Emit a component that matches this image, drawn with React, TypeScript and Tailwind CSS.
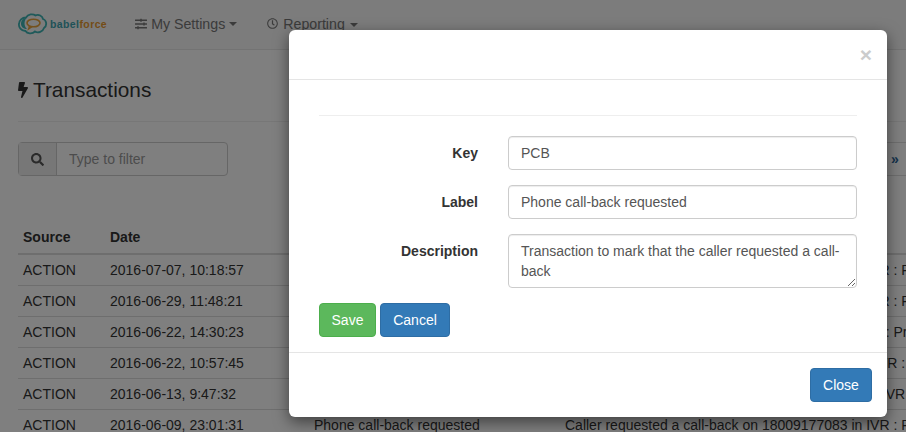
import { FaBolt, FaRegClock, FaSearch, FaSlidersH } from "react-icons/fa";

const rows = [
  { date: "2016-07-07, 10:18:57", number: "18009177083" },
  { date: "2016-06-29, 11:48:21", number: "18009177083" },
  { date: "2016-06-22, 14:30:23", number: "1800917708" },
  { date: "2016-06-22, 10:57:45", number: "180091770831" },
  { date: "2016-06-13, 9:47:32", number: "1800917708312" },
  { date: "2016-06-09, 23:01:31", number: "18009177083" },
];

function Caret() {
  return <span className="ml-1 inline-block border-x-[4px] border-t-[4px] border-x-transparent border-t-current align-middle" />;
}

function Logo() {
  return (
    <div className="flex items-center">
      <svg width="30" height="22" viewBox="0 0 30 22" fill="none">
        <path
          d="M8 4.500C10 1 15 .5 17.500 2.500 20.500 1 24.500 3 25 6c3.500 1 4.500 6.500 1 9-1 3.500-6 5.500-9 3.500C14 21.500 9 20.500 7.500 18 3 18 .5 14 1 11 1.200 7.500 4 4.500 8 4.500Z"
          stroke="#3fb4b4"
          strokeWidth="1.800"
        />
        <path d="M3 11c0-4 3-6 6-6.500C6 7 5.500 13 9 16c-3 0-6-2-6-5Z" fill="#3fb4b4" />
        <ellipse cx="15.500" cy="10" rx="6.500" ry="3.800" stroke="#e8a33a" strokeWidth="1.600" />
        <path d="M11.500 13.200 10.500 16l3.500-2.400" stroke="#e8a33a" strokeWidth="1.300" />
      </svg>
      <span className="ml-[2px] text-[10.5px] font-bold tracking-[0.4px] text-[#3fa5b0]">
        babel<span className="text-[#e8982f]">force</span>
      </span>
    </div>
  );
}

function Navbar() {
  return (
    <nav className="flex h-[50px] items-center border-b border-[#e7e7e7] bg-[#f8f8f8] pb-[2px] pl-[18px] text-[14.2px] text-[#777]">
      <Logo />
      <div className="ml-[28px] flex items-center">
        <FaSlidersH className="mr-[4px] h-[12px] w-[12px]" />
        <span>My Settings</span>
        <Caret />
      </div>
      <div className="ml-[30px] flex items-center">
        <FaRegClock className="mr-[5px] h-[11px] w-[11px]" />
        <span>Reporting</span>
        <span className="ml-[1px]">
          <Caret />
        </span>
      </div>
    </nav>
  );
}

function Background() {
  return (
    <div className="h-[432px] w-[906px] overflow-hidden bg-white font-['Liberation_Sans',Arial,sans-serif] text-[14px] leading-[20px] text-[#333]">
      <Navbar />
      <div className="pl-[18px]">
        <h1 className="flex h-[72px] items-center border-b border-[#eee] pt-[9px] text-[20.8px] font-medium text-[#333]">
          <FaBolt className="mr-[5px] h-[20px] w-[10px]" />
          Transactions
        </h1>
        <div className="mt-[20px] flex h-[34px] items-stretch justify-between">
          <div className="flex w-[210px] rounded-[4px] border border-[#ccc]">
            <span className="flex w-[38px] items-center justify-center border-r border-[#ccc] bg-[#eee] text-[#555]">
              <FaSearch className="h-[13px] w-[13px]" />
            </span>
            <input placeholder="Type to filter" className="min-w-0 flex-1 px-[12px] text-[#555] outline-none placeholder:text-[#999]" />
          </div>
          <div className="w-[30px] border-y border-[#ddd] pl-[15px] leading-[32px] font-bold text-[#2a6496]">»</div>
        </div>
        <table className="mt-[45px] w-[1100px] table-fixed border-collapse">
          <thead>
            <tr className="h-[33px] border-b-2 border-[#ddd] text-left font-bold">
              <th className="w-[92px] pl-[5px]">Source</th>
              <th className="w-[204px] pl-0">Date</th>
              <th className="w-[251px]">Label</th>
              <th>Description</th>
            </tr>
          </thead>
          <tbody>
            {rows.map((row) => (
              <tr key={row.date} className="h-[31px] border-b border-[#ddd]">
                <td className="pl-[5px]">ACTION</td>
                <td>{row.date}</td>
                <td className="whitespace-nowrap">Phone call-back requested</td>
                <td className="whitespace-nowrap">Caller requested a call-back on {row.number} in IVR : Press 1</td>
              </tr>
            ))}
          </tbody>
        </table>
      </div>
    </div>
  );
}

function Field({ label, children }: { label: string; children: React.ReactNode }) {
  return (
    <div className="mb-[15px] flex">
      <label className="w-[159px] pt-[7px] text-right font-bold text-[#333]">{label}</label>
      <div className="ml-[30px] flex-1">{children}</div>
    </div>
  );
}

const inputClass =
  "block w-full rounded-[4px] border border-[#ccc] bg-white px-[12px] py-[6px] text-[14px] leading-[20px] text-[#555] shadow-[inset_0_1px_1px_rgba(0,0,0,0.075)] outline-none";

function Modal() {
  return (
    <div className="absolute left-[289px] top-[30px] w-[598px] rounded-[6px] bg-white font-['Liberation_Sans',Arial,sans-serif] text-[14px] leading-[20px] shadow-[0_5px_15px_rgba(0,0,0,0.5)]">
      <div className="flex h-[50px] items-center justify-end border-b border-[#e5e5e5] pr-[15px]">
        <span className="pt-[1px] text-[21px] font-bold text-[#ccc]">×</span>
      </div>
      <div className="px-[30px] pt-[35px]">
        <hr className="mb-[20px] border-[#eee]" />
        <Field label="Key">
          <input defaultValue="PCB" className={`${inputClass} h-[34px]`} />
        </Field>
        <Field label="Label">
          <input defaultValue="Phone call-back requested" className={`${inputClass} h-[34px]`} />
        </Field>
        <Field label="Description">
          <textarea
            rows={2}
            defaultValue="Transaction to mark that the caller requested a call-back"
            className={`${inputClass} h-[54px] resize-y`}
          />
        </Field>
        <div className="flex gap-[4px] pb-[15px]">
          <button className="h-[34px] w-[57px] rounded-[4px] border border-[#4cae4c] bg-[#5cb85c] text-white">Save</button>
          <button className="h-[34px] w-[70px] rounded-[4px] border border-[#2e6da4] bg-[#337ab7] text-white">Cancel</button>
        </div>
      </div>
      <div className="flex justify-end border-t border-[#e5e5e5] p-[15px]">
        <button className="h-[34px] w-[62px] rounded-[4px] border border-[#2e6da4] bg-[#337ab7] text-white">Close</button>
      </div>
    </div>
  );
}

export default function App() {
  return (
    <div className="relative h-[432px] w-[906px] overflow-hidden">
      <Background />
      <div className="absolute inset-0 bg-black/50" />
      <Modal />
    </div>
  );
}
